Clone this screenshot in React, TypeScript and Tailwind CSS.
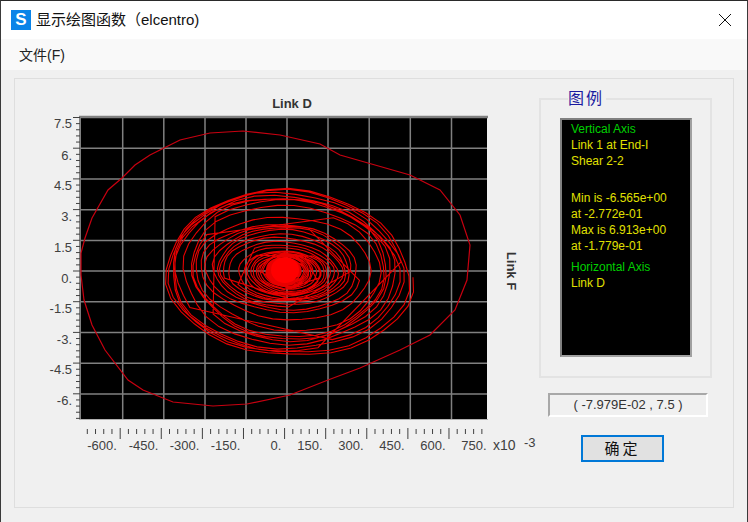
import React, { useMemo } from 'react';

const cjk = { fontFamily: '"Liberation Sans", "Noto Sans CJK SC", sans-serif' };

// zoomed extents of each loop: left, right, top, bottom in page px
const rings = [
  [165, 413, 190, 357], [170, 405, 192, 352], [173, 397, 198, 347], [190, 387, 198, 340],
  [193, 383, 210, 335], [203, 363, 225, 313], [218, 352, 228, 308], [222, 345, 237, 302],
  [233, 335, 245, 300], [245, 327, 250, 295], [252, 322, 252, 293], [258, 320, 256, 290],
  [262, 312, 254, 288], [265, 308, 256, 286], [267, 305, 258, 284], [268, 302, 259, 283],
  [270, 300, 260, 282], [272, 298, 262, 280],
];

const outer =
  '81,275 81,253 85,238 92,218 108,190 122,178 135,165 150,155 180,140 210,133 243,131 280,135 320,144 340,155 375,165 410,175 440,190 460,215 470,245 467,280 455,310 430,335 400,350 360,368 328,380 290,395 247,404 213,406 173,402 143,390 128,380 105,350 92,325 84,300 81,275';

function spiralPoints() {
  const pts: string[] = [];
  const turns = 2;
  const steps = 36;
  for (let i = 0; i < rings.length - 1; i++) {
    const a = rings[i];
    const b = rings[i + 1];
    for (let t = 0; t < turns * steps; t++) {
      const f = t / (turns * steps);
      const [l, r, tp, bt] = a.map((v, k) => v + (b[k] - v) * f);
      const th = (t / steps) * Math.PI * 2 + i * 1.3;
      const wob = 1 + 0.018 * Math.sin(th * 3 + i) + 0.012 * Math.sin(th * 7 + i * 2);
      const x = (l + r) / 2 + ((r - l) / 2) * wob * Math.cos(th);
      const y = (tp + bt) / 2 + ((bt - tp) / 2) * wob * Math.sin(th) + (x - 289) * 0.03;
      pts.push(`${x.toFixed(1)},${y.toFixed(1)}`);
    }
  }
  return pts.join(' ');
}

const gridX = [122.7, 163.8, 205, 246, 287, 328, 369.2, 410.3, 451.5];
const gridY = [148.2, 179, 209.7, 240.4, 271, 301.8, 332.5, 363.2, 394];
const yLabels = [
  ['7.5', 128], ['6.', 160], ['4.5', 190], ['3.', 221], ['1.5', 252], ['0.', 283],
  ['-1.5', 313], ['-3.', 344], ['-4.5', 374], ['-6.', 405],
] as const;
const xLabels = [
  ['-600.', 102], ['-450.', 143.5], ['-300.', 184.5], ['-150.', 225.5], ['0.', 276],
  ['150.', 310], ['300.', 351], ['450.', 392], ['600.', 433], ['750.', 474],
] as const;

function Chart() {
  const spiral = useMemo(spiralPoints, []);
  const yTicks = Array.from({ length: 50 }, (_, i) => 117.5 + i * 6.14).filter((y) => y < 419);
  const xTicks = Array.from({ length: 49 }, (_, i) => 87.3 + i * 8.22);

  return (
    <svg width="524" height="400" viewBox="15 79 524 400" className="shrink-0">
      <rect x="80" y="116" width="407" height="303" fill="#000" />
      <g stroke="#808080" strokeWidth="1.5">
        {gridX.map((x) => <line key={x} x1={x} x2={x} y1="117" y2="419" />)}
        {gridY.map((y) => <line key={y} x1="80" x2="487" y1={y} y2={y} />)}
        <line x1="79" x2="488" y1="117" y2="117" strokeWidth="2.5" />
        <line x1="80" x2="80" y1="116" y2="419" strokeWidth="2" />
        <line x1="79" x2="488" y1="419.5" y2="419.5" stroke="#b0b0b0" strokeWidth="1" />
      </g>
      <polyline points={outer} fill="none" stroke="#c80010" strokeWidth="1.2" />
      <polyline points={spiral} fill="none" stroke="#e80000" strokeWidth="1.1" />
      <ellipse cx="285" cy="270" rx="14" ry="13" fill="#ff0000" />
      <g stroke="#404040" strokeWidth="1">
        {yTicks.map((y, i) => (
          <line key={y} x1={i % 5 === 0 ? 73 : 76} x2="80" y1={y} y2={y} />
        ))}
        {xTicks.map((x, i) => (
          <line key={x} x1={x} x2={x} y1={i % 5 === 4 ? 428 : 429} y2={i % 5 === 4 ? 439 : 434} />
        ))}
      </g>
      <g fontFamily="'Liberation Sans', sans-serif" fontSize="13" fill="#404040">
        {yLabels.map(([t, y]) => (
          <text key={t} x="72" y={y} textAnchor="end">{t}</text>
        ))}
        {xLabels.map(([t, x]) => (
          <text key={t} x={x} y="450" textAnchor="middle">{t}</text>
        ))}
        <text x="493" y="450" fontSize="14">x10</text>
        <text x="524" y="447">-3</text>
      </g>
      <g fontFamily="'Liberation Sans', sans-serif" fontSize="13" fontWeight="700" fill="#333">
        <text x="292" y="108" textAnchor="middle">Link D</text>
        <text x="0" y="0" textAnchor="middle" transform="translate(507 271) rotate(90)">Link F</text>
      </g>
    </svg>
  );
}

const legendLines = [
  { t: 'Vertical Axis', c: 'text-[#00d000]' },
  { t: 'Link 1 at End-I', c: 'text-[#e0e000]' },
  { t: 'Shear 2-2', c: 'text-[#e0e000] mb-[21px]' },
  { t: 'Min is -6.565e+00', c: 'text-[#e0e000]' },
  { t: 'at -2.772e-01', c: 'text-[#e0e000]' },
  { t: 'Max is 6.913e+00', c: 'text-[#e0e000]' },
  { t: 'at -1.779e-01', c: 'text-[#e0e000] mb-[5px]' },
  { t: 'Horizontal Axis', c: 'text-[#00d000]' },
  { t: 'Link D', c: 'text-[#e0e000]' },
];

export default function App() {
  return (
    <div className="w-[748px] h-[522px] bg-[#f0f0f0] flex flex-col border-t border-x border-t-[#2a2a2a] border-x-[#3a3a3a] overflow-hidden" style={cjk}>
      <div className="h-[38px] bg-white flex items-center pl-[10px] pr-[15px] shrink-0">
        <div className="w-5 h-5 bg-[#0a84e8] text-white font-bold text-[17px] leading-5 text-center">S</div>
        <span className="ml-[5px] text-[15px] text-[#111]">显示绘图函数（elcentro)</span>
        <svg width="14" height="14" viewBox="0 0 14 14" className="ml-auto" stroke="#111" strokeWidth="1">
          <path d="M1 1 L13 13 M13 1 L1 13" />
        </svg>
      </div>
      <div className="h-[31px] bg-[#f9f9f9] flex items-center pl-[18px] text-sm text-[#222] shrink-0">文件(F)</div>
      <div className="flex-1 px-[13px] pt-2 pb-[14px]">
        <div className="h-full border border-[#dedede] flex">
          <Chart />
          <div className="flex flex-col">
            <fieldset className="w-[173px] h-[289px] mt-[10px] border-2 border-[#e3e3e3] pl-[19px]">
              <legend className="ml-2 pr-[2px] text-base leading-5 tracking-[2px] text-[#1a1aa0]">图例</legend>
              <div className="w-[132px] h-[239px] mt-[9px] bg-black border-2 border-t-[#808080] border-l-[#808080] border-b-[#a0a0a0] border-r-[#a0a0a0] pl-[9px] pt-px text-xs leading-4">
                {legendLines.map((l) => (
                  <div key={l.t} className={l.c}>{l.t}</div>
                ))}
              </div>
            </fieldset>
            <div className="w-40 h-6 ml-[9px] mt-[15px] border-2 border-t-[#a8a8a8] border-l-[#a8a8a8] border-b-white border-r-white text-[13px] leading-5 text-center text-[#333]">
              ( -7.979E-02 , 7.5 )
            </div>
            <button className="w-[83px] h-[27px] ml-[42px] mt-[18px] bg-[#e1e1e1] border-2 border-[#0078d7] text-[15px] leading-5 tracking-[3px] text-[#111]">
              确定
            </button>
          </div>
        </div>
      </div>
    </div>
  );
}
